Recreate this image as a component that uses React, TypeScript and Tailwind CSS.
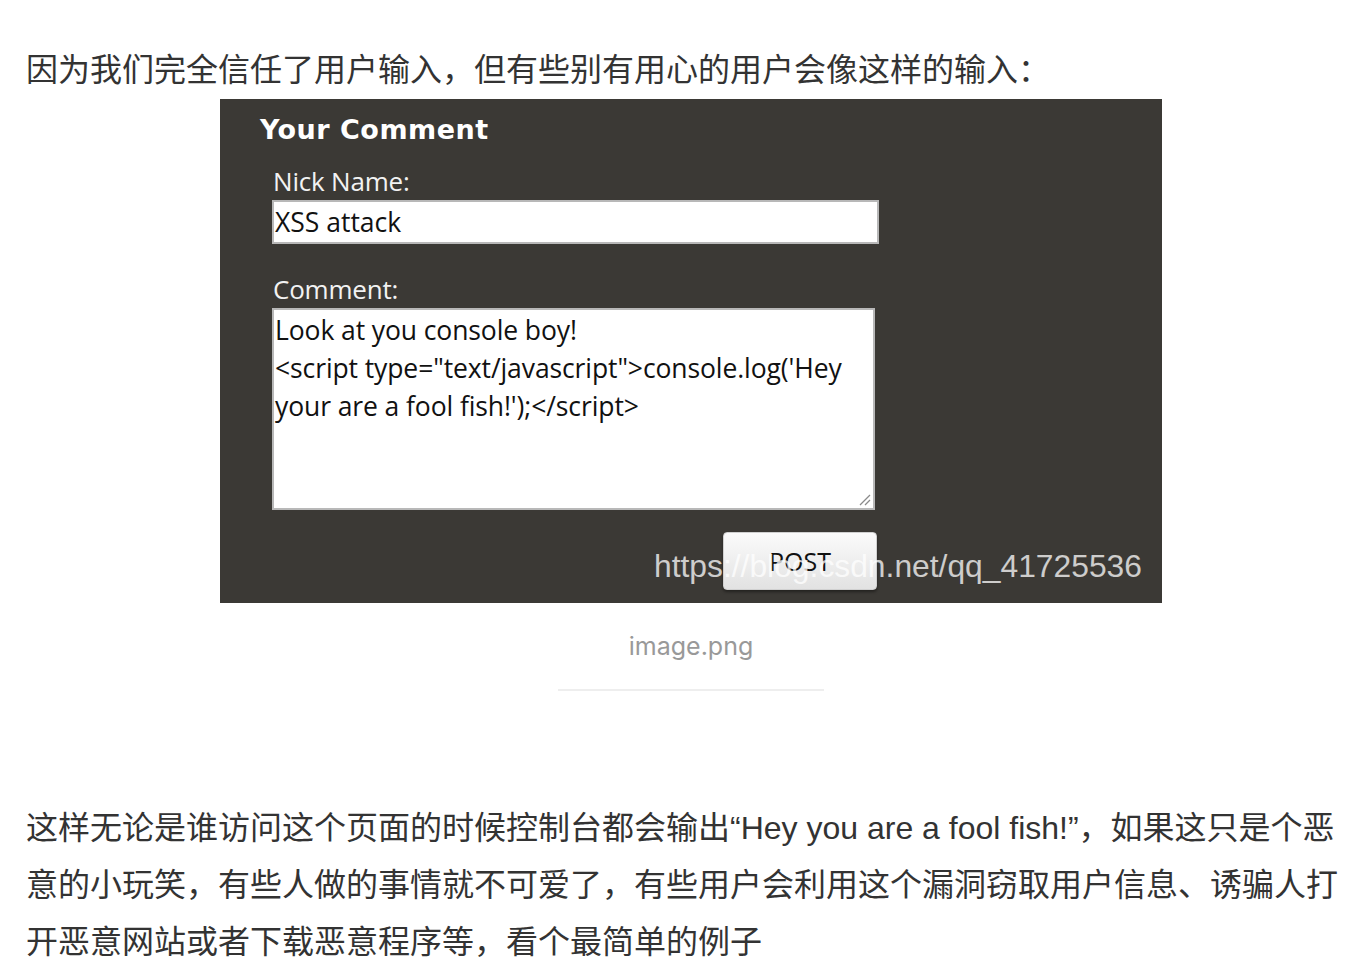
import React from "react";

const cjk = { fontFamily: '"Liberation Sans", "Noto Sans CJK SC", sans-serif' };
const ui = { fontFamily: '"Open Sans", "DejaVu Sans", sans-serif' };

export default function App() {
  return (
    <div className="bg-white w-[1372px] h-[970px] overflow-hidden">
      <div className="pl-[26px] w-[1356px] pt-[42px] text-[#333] text-[32px] leading-[57px]" style={cjk}>
        <p className="whitespace-nowrap">因为我们完全信任了用户输入，但有些别有用心的用户会像这样的输入：</p>

        <div className="flex flex-col items-center">
          <div className="relative w-[942px] h-[504px] bg-[#3b3935] text-white" style={ui}>
            <div className="pl-[40px] pt-[12px]">
              <div className="text-[27px] leading-[38px] font-bold tracking-[0.5px]" style={{ fontFamily: '"DejaVu Sans", sans-serif' }}>
                Your Comment
              </div>
              <div className="pl-[13px] pt-[17px] text-[26px] leading-[30px] text-[#f2f2f2] tracking-[-0.2px]">Nick Name:</div>
              <div className="ml-[12px] mt-[4px] w-[607px] h-[44px] bg-white border-2 border-[#b8b8b8] flex items-center pl-[1px] text-[26.5px] text-[#111]">
                XSS attack
              </div>
              <div className="pl-[13px] pt-[30px] text-[26px] leading-[30px] text-[#f2f2f2] tracking-[-0.2px]">Comment:</div>
              <div className="relative ml-[12px] mt-[4px] w-[603px] h-[202px] bg-white border-2 border-[#b8b8b8] pl-[1px] pt-[1px] text-[26.5px] leading-[38px] text-[#111] tracking-[-0.1px] whitespace-nowrap">
                <div>Look at you console boy!</div>
                <div>&lt;script type="text/javascript"&gt;console.log('Hey</div>
                <div>your are a fool fish!');&lt;/script&gt;</div>
                <svg className="absolute right-[2px] bottom-[2px]" width="14" height="14" viewBox="0 0 14 14">
                  <line x1="13" y1="3" x2="3" y2="13" stroke="#8a8a8a" strokeWidth="1.3" />
                  <line x1="13" y1="8" x2="8" y2="13" stroke="#8a8a8a" strokeWidth="1.3" />
                </svg>
              </div>
              <div className="flex pl-[463px] pt-[22px]">
                <div className="w-[154px] h-[58px] rounded-[4px] bg-gradient-to-b from-[#fbfbfb] to-[#e2e2e2] border border-[#d0d0d0] shadow-[0_2px_3px_rgba(0,0,0,0.4)] flex items-center justify-center text-[25px] text-[#111]">
                  POST
                </div>
              </div>
            </div>
            <div
              className="absolute left-[434px] top-[447px] text-[31.8px] leading-[40px] text-white/75 whitespace-nowrap"
              style={{ fontFamily: '"Liberation Sans", sans-serif' }}
            >
              https://blog.csdn.net/qq_41725536
            </div>
          </div>
          <div className="mt-[27px] text-[25px] leading-[33px] text-[#999]" style={{ fontFamily: '"Inter", "Liberation Sans", sans-serif' }}>
            image.png
          </div>
          <div className="mt-[26px] w-[266px] h-[2px] bg-[#eeeeee]"></div>
        </div>

        <p className="mt-[109px] whitespace-nowrap">
          这样无论是谁访问这个页面的时候控制台都会输出“Hey you are a fool fish!”，如果这只是个恶
          <br />
          意的小玩笑，有些人做的事情就不可爱了，有些用户会利用这个漏洞窃取用户信息、诱骗人打
          <br />
          开恶意网站或者下载恶意程序等，看个最简单的例子
        </p>
      </div>
    </div>
  );
}
